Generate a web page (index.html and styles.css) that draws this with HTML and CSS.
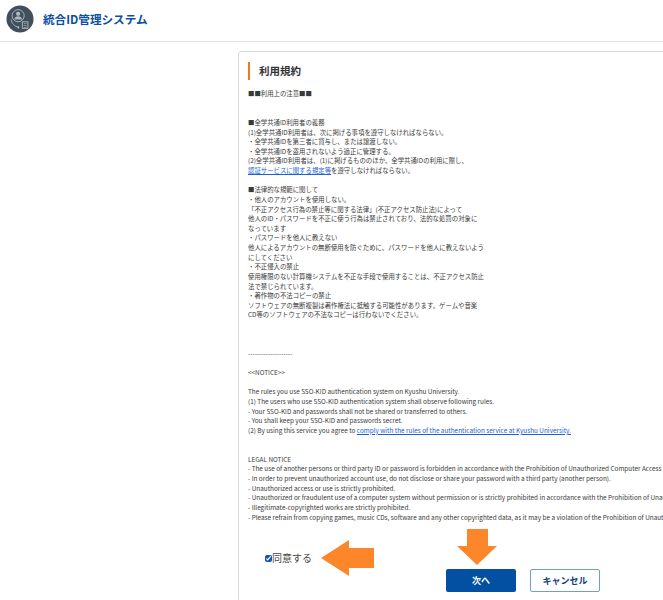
FILE: index.html
```html
<!DOCTYPE html>
<html lang="ja">
<head>
<meta charset="utf-8">
<title>統合ID管理システム</title>
<link rel="stylesheet" href="styles.css">
</head>
<body>
<header class="site-header">
  <svg class="logo" viewBox="0 0 30 30" width="28" height="28" aria-hidden="true">
    <circle cx="15" cy="15" r="14.5" fill="#3f4f5b"/>
    <g fill="none" stroke="#aeb8be" stroke-width="1">
      <circle cx="13" cy="11.5" r="6.5"/>
      <path d="M5.5 15.5c.5 4 3.5 7.5 8.5 8.5"/>
    </g>
    <circle cx="13" cy="9.5" r="2.3" fill="#aeb8be"/>
    <path d="M8.7 15.6c.6-2.6 2.2-3.6 4.3-3.6s3.700 1 4.300 3.600z" fill="#aeb8be"/>
    <path d="M14 22l-2 2 2 1.800z" fill="#aeb8be"/>
    <rect x="17.500" y="18" width="6" height="7" fill="none" stroke="#aeb8be" stroke-width="1"/>
    <path d="M19 20h3M19 22h3M19 24h3" stroke="#aeb8be" stroke-width=".7"/>
  </svg>
  <h1 class="site-title">統合ID管理システム</h1>
</header>
<main class="page">
  <section class="card">
    <h2 class="card-title">利用規約</h2>
    <div class="terms">
      <p>■■利用上の注意■■</p>
      <p class="gap-2">■全学共通ID利用者の義務<br>
      (1)全学共通ID利用者は、次に掲げる事項を遵守しなければならない。<br>
      ・全学共通IDを第三者に貸与し、または譲渡しない。<br>
      ・全学共通IDを盗用されないよう適正に管理する。<br>
      (2)全学共通ID利用者は、(1)に掲げるもののほか、全学共通IDの利用に際し、<br>
      <a href="#">認証サービスに関する規定等</a>を遵守しなければならない。</p>
      <p class="gap-1">■法律的な規範に関して<br>
      ・他人のアカウントを使用しない。<br>
      「不正アクセス行為の禁止等に関する法律」(不正アクセス防止法)によって<br>
      他人のID・パスワードを不正に使う行為は禁止されており、法的な処罰の対象に<br>
      なっています<br>
      ・パスワードを他人に教えない<br>
      他人によるアカウントの無断使用を防ぐために、パスワードを他人に教えないよう<br>
      にしてください<br>
      ・不正侵入の禁止<br>
      使用権限のない計算機システムを不正な手段で使用することは、不正アクセス防止<br>
      法で禁じられています。<br>
      ・著作物の不法コピーの禁止<br>
      ソフトウェアの無断複製は著作権法に抵触する可能性があります。ゲームや音楽<br>
      CD等のソフトウェアの不法なコピーは行わないでください。</p>
      <p class="gap-3">--------------------</p>
      <p class="gap-1">&lt;&lt;NOTICE&gt;&gt;</p>
      <p class="gap-1">The rules you use SSO-KID authentication system on Kyushu University.<br>
      (1) The users who use SSO-KID authentication system shall observe following rules.<br>
      - Your SSO-KID and passwords shall not be shared or transferred to others.<br>
      - You shall keep your SSO-KID and passwords secret.<br>
      (2) By using this service you agree to <a href="#">comply with the rules of the authentication service at Kyushu University.</a></p>
      <p class="gap-2">LEGAL NOTICE<br>
      - The use of another persons or third party ID or password is forbidden in accordance with the Prohibition of Unauthorized Computer Access Law.<br>
      - In order to prevent unauthorized account use, do not disclose or share your password with a third party (another person).<br>
      - Unauthorized access or use is strictly prohibited.<br>
      - Unauthorized or fraudulent use of a computer system without permission or is strictly prohibited in accordance with the Prohibition of Unauthorized Computer Access Law.<br>
      - Illegitimate-copyrighted works are strictly prohibited.<br>
      - Please refrain from copying games, music CDs, software and any other copyrighted data, as it may be a violation of the Prohibition of Unauthorized Copying.</p>
    </div>
    <label class="agree"><input type="checkbox" class="agree-box" checked>同意する</label>
    <div class="actions">
      <button type="button" class="btn btn-primary">次へ</button>
      <button type="button" class="btn btn-secondary">キャンセル</button>
    </div>
  </section>
</main>
<svg class="arrow arrow-left" viewBox="0 0 53 36" width="53" height="36" aria-hidden="true">
  <path d="M0 18 28 0V8H53V28H28V36Z" fill="#fd862a"/>
</svg>
<svg class="arrow arrow-down" viewBox="0 0 40 36" width="40" height="36" aria-hidden="true">
  <path d="M10 0H31V17H40L20 36 0 17H10Z" fill="#fd862a"/>
</svg>
</body>
</html>
```
FILE: styles.css
```css
* { box-sizing: border-box; }
html, body { margin: 0; height: 600px; overflow: hidden; }
body {
  position: relative;
  background: #fff;
  color: #333;
  font-family: "Noto Sans CJK JP", "Noto Sans", sans-serif;
}
.site-header {
  display: flex;
  align-items: center;
  gap: 9px;
  height: 42px;
  padding: 0 0 3px 6px;
  border-bottom: 1px solid #e2e2e2;
}
.logo { margin-bottom: 1px; }
.site-title {
  margin: 0;
  font-size: 11.6px;
  font-weight: 700;
  color: #0b4fa0;
}
.page { padding: 9px 0 0 238px; }
.card {
  width: 560px;
  height: 570px;
  padding: 10px 9px;
  border: 1px solid #d9d9d9;
  border-radius: 3px;
}
.card-title {
  margin: 0 0 9px;
  padding-left: 9px;
  height: 18px;
  border-left: 2px solid #ee7a1c;
  font-size: 10.5px;
  font-weight: 700;
  line-height: 18px;
  color: #333;
}
.terms {
  font-size: 6.4px;
  line-height: 9.63px;
  white-space: nowrap;
  color: #3a3a3a;
}
.terms p { margin: 0; }
.terms .gap-1 { margin-top: 9.63px; }
.terms .gap-2 { margin-top: 19.26px; }
.terms .gap-3 { margin-top: 28.89px; }
.terms a { color: #1a62d6; text-decoration: underline; }
.agree {
  display: flex;
  align-items: center;
  margin: 28px 0 0 17px;
  font-size: 10px;
  line-height: 16px;
  color: #444;
}
.agree-box {
  width: 7px;
  height: 7px;
  margin: 0;
  accent-color: #0b57b8;
}
.actions {
  display: flex;
  gap: 14px;
  margin: 3px 0 0 198px;
}
.btn {
  width: 70px;
  height: 23px;
  padding: 0;
  border-radius: 2px;
  font-family: inherit;
  font-size: 9px;
  font-weight: 700;
}
.btn-primary {
  border: 0;
  background: #0350a3;
  color: #fff;
}
.btn-secondary {
  border: 1px solid #6f9fd2;
  background: #fff;
  color: #0b3f80;
}
.arrow { position: absolute; }
.arrow-left { left: 321px; top: 540px; }
.arrow-down { left: 457px; top: 529px; }
```
